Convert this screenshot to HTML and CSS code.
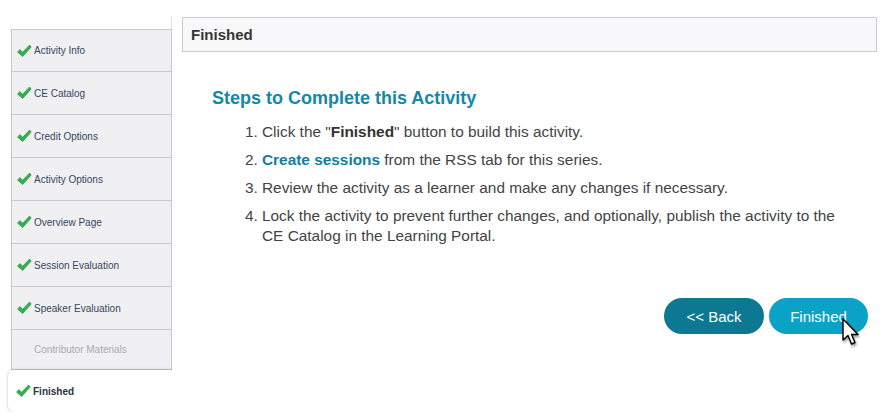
FILE: index.html
```html
<!DOCTYPE html>
<html>
<head>
<meta charset="utf-8">
<link rel="stylesheet" href="styles.css">
</head>
<body>
<div class="page">
  <nav class="sidebar">
    <div class="item done"><svg class="chk" viewBox="0 0 16 14"><path d="M1.5 8 L4 5.6 L6.6 8.3 L13.6 1 L15.2 3 L6.6 12.6 Z" fill="#2fb34a" stroke="#1d8a33" stroke-width="0.6"/></svg>Activity Info</div>
    <div class="item done"><svg class="chk" viewBox="0 0 16 14"><path d="M1.5 8 L4 5.6 L6.6 8.3 L13.6 1 L15.2 3 L6.6 12.6 Z" fill="#2fb34a" stroke="#1d8a33" stroke-width="0.6"/></svg>CE Catalog</div>
    <div class="item done"><svg class="chk" viewBox="0 0 16 14"><path d="M1.5 8 L4 5.6 L6.6 8.3 L13.6 1 L15.2 3 L6.6 12.6 Z" fill="#2fb34a" stroke="#1d8a33" stroke-width="0.6"/></svg>Credit Options</div>
    <div class="item done"><svg class="chk" viewBox="0 0 16 14"><path d="M1.5 8 L4 5.6 L6.6 8.3 L13.6 1 L15.2 3 L6.6 12.6 Z" fill="#2fb34a" stroke="#1d8a33" stroke-width="0.6"/></svg>Activity Options</div>
    <div class="item done"><svg class="chk" viewBox="0 0 16 14"><path d="M1.5 8 L4 5.6 L6.6 8.3 L13.6 1 L15.2 3 L6.6 12.6 Z" fill="#2fb34a" stroke="#1d8a33" stroke-width="0.6"/></svg>Overview Page</div>
    <div class="item done"><svg class="chk" viewBox="0 0 16 14"><path d="M1.5 8 L4 5.6 L6.6 8.3 L13.6 1 L15.2 3 L6.6 12.6 Z" fill="#2fb34a" stroke="#1d8a33" stroke-width="0.6"/></svg>Session Evaluation</div>
    <div class="item done"><svg class="chk" viewBox="0 0 16 14"><path d="M1.5 8 L4 5.6 L6.6 8.3 L13.6 1 L15.2 3 L6.6 12.6 Z" fill="#2fb34a" stroke="#1d8a33" stroke-width="0.6"/></svg>Speaker Evaluation</div>
    <div class="item disabled">Contributor Materials</div>
    <div class="item active"><svg class="chk" viewBox="0 0 16 14"><path d="M1.5 8 L4 5.6 L6.6 8.3 L13.6 1 L15.2 3 L6.6 12.6 Z" fill="#2fb34a" stroke="#1d8a33" stroke-width="0.6"/></svg>Finished</div>
  </nav>
  <main class="content">
    <div class="title-bar">Finished</div>
    <div class="body">
      <h2 class="heading">Steps to Complete this Activity</h2>
      <ol class="steps">
        <li>Click the "<b>Finished</b>" button to build this activity.</li>
        <li><a class="link">Create sessions</a> from the RSS tab for this series.</li>
        <li>Review the activity as a learner and make any changes if necessary.</li>
        <li>Lock the activity to prevent further changes, and optionally, publish the activity to the CE Catalog in the Learning Portal.</li>
      </ol>
      <div class="actions">
        <button class="btn back">&lt;&lt; Back</button>
        <button class="btn finish">Finished
          <svg class="cursor" viewBox="0 0 20 30" width="20" height="30"><path d="M1 1 L1 22 L6 17.5 L9.5 26 L13 24.5 L9.5 16.5 L16 16.5 Z" fill="#fff" stroke="#000" stroke-width="1.4" stroke-linejoin="round"/></svg>
        </button>
      </div>
    </div>
  </main>
</div>
</body>
</html>
```
FILE: styles.css
```css
* { box-sizing: border-box; }
body {
  margin: 0;
  background: #fff;
  font-family: "Liberation Sans", Arial, sans-serif;
  color: #444;
}
.page {
  display: flex;
  align-items: flex-start;
  padding-top: 17px;
}
.sidebar {
  width: 172px;
  margin-top: 12px;
  padding-left: 11px;
  display: flex;
  flex-direction: column;
  position: relative;
}
.sidebar::before {
  content: "";
  position: absolute;
  right: 0;
  top: -12px;
  height: 12px;
  width: 1px;
  background: #e2e2e6;
}
.item {
  height: 43px;
  background: #f0f0f3;
  border: 1px solid #c8c8cc;
  border-top: none;
  display: flex;
  align-items: center;
  padding-left: 4px;
  font-size: 10px;
  color: #34465e;
}
.item:first-child { border-top: 1px solid #c8c8cc; }
.chk {
  width: 16px;
  height: 14px;
  margin-right: 2px;
  flex: none;
}
.item.disabled {
  color: #a9a9ae;
  padding-left: 22px;
  height: 40px;
}
.item.active {
  background: #fff;
  border: none;
  margin-left: -3px;
  margin-right: -12px;
  height: 42px;
  border-radius: 6px;
  box-shadow: 0 0 3px rgba(0,0,0,0.25);
  font-weight: bold;
  color: #2f3340;
  padding-left: 7px;
  clip-path: inset(-6px 12px -6px -6px);
}
.content {
  flex: 1;
  margin-left: 10px;
  margin-right: 7px;
}
.title-bar {
  height: 35px;
  background: #f8f8fa;
  border: 1px solid #cccccf;
  padding-left: 8px;
  display: flex;
  align-items: center;
  font-weight: bold;
  font-size: 15px;
  color: #353535;
}
.body {
  padding-left: 30px;
}
.heading {
  margin: 36px 0 0;
  font-size: 18px;
  font-weight: bold;
  color: #1488a8;
}
.steps {
  margin: 13px 0 0;
  padding-left: 50px;
  font-size: 15.4px;
  line-height: 20px;
  color: #444;
  width: 633px;
}
.steps li { margin-bottom: 8px; padding-left: 0; }
.steps b { color: #333; }
.link { color: #0e7f9e; font-weight: bold; }
.actions {
  display: flex;
  justify-content: flex-end;
  gap: 5px;
  margin-top: 52px;
  margin-right: 9px;
}
.btn {
  height: 36px;
  width: 100px;
  border: none;
  border-radius: 18px;
  color: #fff;
  font-family: "Liberation Sans", Arial, sans-serif;
  font-size: 15px;
  position: relative;
  padding: 0;
}
.back { background: #0d7892; }
.finish { background: #0aa2c6; width: 99px; }
.cursor {
  position: absolute;
  left: 73px;
  top: 20px;
  filter: drop-shadow(1px 2px 1px rgba(0,0,0,0.4));
}
```
